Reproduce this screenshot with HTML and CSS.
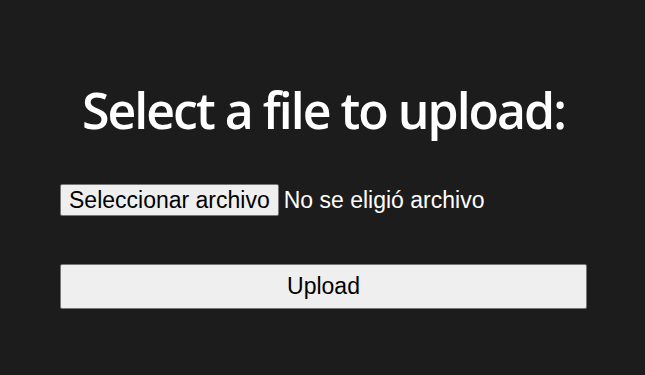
FILE: index.html
```html
<!DOCTYPE html>
<html lang="es">
<head>
<meta charset="utf-8">
<title>Upload</title>
<link rel="stylesheet" href="styles.css">
</head>
<body>
<main class="page">
  <h1 class="title">Select a file to upload:</h1>
  <form class="form">
    <div class="file-row">
      <button type="button" class="file-btn">Seleccionar archivo</button>
      <span class="file-status">No se eligió archivo</span>
    </div>
    <button type="button" class="upload-btn">Upload</button>
  </form>
</main>
</body>
</html>
```
FILE: styles.css
```css
html, body {
  margin: 0;
  padding: 0;
  background: #1c1c1c;
}
.page {
  width: 527px;
  margin: 0 0 0 60px;
  padding-top: 78px;
  display: flex;
  flex-direction: column;
  color: #fff;
}
.title {
  margin: 0;
  text-align: center;
  font-family: "Open Sans", sans-serif;
  font-weight: 600;
  font-size: 50px;
  letter-spacing: -2px;
  line-height: 64px;
}
.form {
  display: flex;
  flex-direction: column;
  margin-top: 42px;
}
.file-row {
  display: flex;
  align-items: center;
  gap: 5px;
  font-family: "Liberation Sans", Arial, sans-serif;
  font-size: 23px;
}
.file-btn {
  font-family: inherit;
  font-size: 23px;
  color: #000;
  background: #efefef;
  border: 1px solid #767676;
  border-radius: 2px;
  padding: 0 8px;
  height: 32px;
}
.file-status {
  color: #fff;
}
.upload-btn {
  margin-top: 48px;
  height: 45px;
  font-family: "Liberation Sans", Arial, sans-serif;
  font-size: 23px;
  color: #000;
  background: #efefef;
  border: 1px solid #767676;
  border-radius: 2px;
}
```
